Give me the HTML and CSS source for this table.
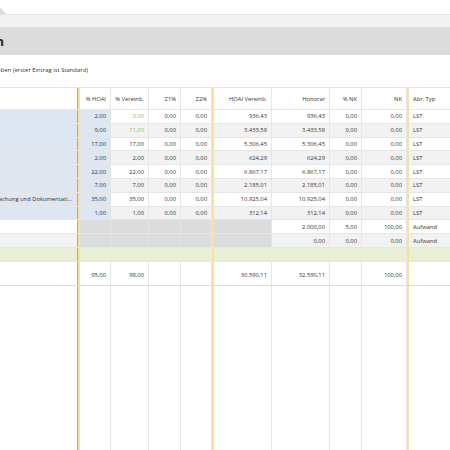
FILE: index.html
```html
<!DOCTYPE html>
<html lang="de">
<head>
<meta charset="utf-8">
<title>Honorarermittlung</title>
<link rel="stylesheet" href="styles.css">
</head>
<body>
<div class="app">
  <div class="tabbar"><div class="tab"></div></div>
  <div class="toolbar"></div>
  <div class="titlebar"><div class="title">Honorar Leistungsphasen</div></div>
  <div class="content">
    <div class="hint"><span>Bitte Abrechnungstypen angeben (erster Eintrag ist Standard)</span></div>
    <div class="grid">
      <div class="row head">
        <div class="c desc"></div><div class="sep1"></div>
        <div class="c">% HOAI</div><div class="c">% Vereinb.</div><div class="c">Z1%</div><div class="c">Z2%</div><div class="sep2"></div>
        <div class="c">HOAI Vereinb.</div><div class="c">Honorar</div><div class="c">% NK</div><div class="c">NK</div><div class="sep3"></div>
        <div class="c left">Abr. Typ</div>
      </div>
      <div class="row">
        <div class="c desc blue"></div><div class="sep1"></div>
        <div class="c blue">2,00</div><div class="c green">3,00</div><div class="c">0,00</div><div class="c">0,00</div><div class="sep2"></div>
        <div class="c">936,43</div><div class="c">936,43</div><div class="c">0,00</div><div class="c">0,00</div><div class="sep3"></div>
        <div class="c left">LST</div>
      </div>
      <div class="row alt">
        <div class="c desc blue"></div><div class="sep1"></div>
        <div class="c blue">9,00</div><div class="c green">11,00</div><div class="c">0,00</div><div class="c">0,00</div><div class="sep2"></div>
        <div class="c">3.433,58</div><div class="c">3.433,58</div><div class="c">0,00</div><div class="c">0,00</div><div class="sep3"></div>
        <div class="c left">LST</div>
      </div>
      <div class="row">
        <div class="c desc blue"></div><div class="sep1"></div>
        <div class="c blue">17,00</div><div class="c">17,00</div><div class="c">0,00</div><div class="c">0,00</div><div class="sep2"></div>
        <div class="c">5.306,45</div><div class="c">5.306,45</div><div class="c">0,00</div><div class="c">0,00</div><div class="sep3"></div>
        <div class="c left">LST</div>
      </div>
      <div class="row alt">
        <div class="c desc blue"></div><div class="sep1"></div>
        <div class="c blue">2,00</div><div class="c">2,00</div><div class="c">0,00</div><div class="c">0,00</div><div class="sep2"></div>
        <div class="c">624,29</div><div class="c">624,29</div><div class="c">0,00</div><div class="c">0,00</div><div class="sep3"></div>
        <div class="c left">LST</div>
      </div>
      <div class="row">
        <div class="c desc blue"></div><div class="sep1"></div>
        <div class="c blue">22,00</div><div class="c">22,00</div><div class="c">0,00</div><div class="c">0,00</div><div class="sep2"></div>
        <div class="c">6.867,17</div><div class="c">6.867,17</div><div class="c">0,00</div><div class="c">0,00</div><div class="sep3"></div>
        <div class="c left">LST</div>
      </div>
      <div class="row alt">
        <div class="c desc blue"></div><div class="sep1"></div>
        <div class="c blue">7,00</div><div class="c">7,00</div><div class="c">0,00</div><div class="c">0,00</div><div class="sep2"></div>
        <div class="c">2.185,01</div><div class="c">2.185,01</div><div class="c">0,00</div><div class="c">0,00</div><div class="sep3"></div>
        <div class="c left">LST</div>
      </div>
      <div class="row">
        <div class="c desc blue"><span class="clip">8 Objektüberwachung – Bauüberwachung und Dokumentati…</span></div><div class="sep1"></div>
        <div class="c blue">35,00</div><div class="c">35,00</div><div class="c">0,00</div><div class="c">0,00</div><div class="sep2"></div>
        <div class="c">10.925,04</div><div class="c">10.925,04</div><div class="c">0,00</div><div class="c">0,00</div><div class="sep3"></div>
        <div class="c left">LST</div>
      </div>
      <div class="row alt">
        <div class="c desc blue"></div><div class="sep1"></div>
        <div class="c blue">1,00</div><div class="c">1,00</div><div class="c">0,00</div><div class="c">0,00</div><div class="sep2"></div>
        <div class="c">312,14</div><div class="c">312,14</div><div class="c">0,00</div><div class="c">0,00</div><div class="sep3"></div>
        <div class="c left">LST</div>
      </div>
      <div class="row">
        <div class="c desc"></div><div class="sep1"></div>
        <div class="c dark"></div><div class="c dark"></div><div class="c dark"></div><div class="c dark"></div><div class="sep2"></div>
        <div class="c dark"></div><div class="c">2.000,00</div><div class="c">5,00</div><div class="c">100,00</div><div class="sep3"></div>
        <div class="c left">Aufwand</div>
      </div>
      <div class="row alt">
        <div class="c desc"></div><div class="sep1"></div>
        <div class="c dark"></div><div class="c dark"></div><div class="c dark"></div><div class="c dark"></div><div class="sep2"></div>
        <div class="c dark"></div><div class="c">0,00</div><div class="c">0,00</div><div class="c">0,00</div><div class="sep3"></div>
        <div class="c left">Aufwand</div>
      </div>
      <div class="row new">
        <div class="c desc"></div><div class="sep1"></div>
        <div class="c"></div><div class="c"></div><div class="c"></div><div class="c"></div><div class="sep2"></div>
        <div class="c"></div><div class="c"></div><div class="c"></div><div class="c"></div><div class="sep3"></div>
        <div class="c left"></div>
      </div>
      <div class="row total">
        <div class="c desc"></div><div class="sep1"></div>
        <div class="c">95,00</div><div class="c">98,00</div><div class="c"></div><div class="c"></div><div class="sep2"></div>
        <div class="c">30.590,11</div><div class="c">32.590,11</div><div class="c"></div><div class="c">100,00</div><div class="sep3"></div>
        <div class="c left"></div>
      </div>
      <div class="row filler">
        <div class="c desc"></div><div class="sep1"></div>
        <div class="c"></div><div class="c"></div><div class="c"></div><div class="c"></div><div class="sep2"></div>
        <div class="c"></div><div class="c"></div><div class="c"></div><div class="c"></div><div class="sep3"></div>
        <div class="c left"></div>
      </div>
    </div>
  </div>
</div>
</body>
</html>
```

FILE: styles.css
```css
* { box-sizing: border-box; }
html, body { margin: 0; padding: 0; }
body {
  width: 450px;
  height: 450px;
  overflow: hidden;
  background: #fff;
  font-family: "Open Sans", "Noto Sans", sans-serif;
  color: #333;
}
.app { display: flex; flex-direction: column; height: 450px; }

.tabbar {
  height: 15px;
  border-bottom: 1px solid #e4e4e4;
  display: flex;
  align-items: flex-end;
}
.tab {
  width: 6px;
  height: 7px;
  background: #dadada;
  clip-path: polygon(0 0, 100% 100%, 0 100%);
}
.toolbar { height: 12px; background: #f3f3f3; }
.titlebar {
  height: 28px;
  background: #dcdcdc;
  display: flex;
  align-items: center;
}
.title {
  width: 4px;
  display: flex;
  justify-content: flex-end;
  white-space: nowrap;
  font-weight: 700;
  font-size: 13px;
  color: #2a2a2a;
}

.content { flex: 1; display: flex; flex-direction: column; padding-top: 10px; }
.hint {
  width: 88px;
  height: 10px;
  line-height: 10px;
  display: flex;
  justify-content: flex-end;
  white-space: nowrap;
  font-size: 5.9px;
  color: #333;
}
.grid {
  margin-top: 12px;
  flex: 1;
  display: flex;
  flex-direction: column;
  border-top: 1px solid #e4e4e4;
}
.row {
  display: grid;
  grid-template-columns: 77px 3px 31px 38px 32px 31px 2px 58px 58px 32px 45px 2px 1fr;
  height: 13.8px;
  border-bottom: 1px solid #e6e6e6;
  font-size: 5.8px;
  background: #fff;
}
.row.alt { background: #f2f2f2; }
.row.head { height: 22px; }
.row.new { background: #e8f0d6; }
.row.total { height: 24px; border-bottom-color: #dedede; }
.row.total .c { padding-top: 4px; }
.row.filler { flex: 1; border-bottom: none; }

.c {
  border-right: 1px solid #e6e6e6;
  padding: 0 4px;
  display: flex;
  align-items: center;
  justify-content: flex-end;
  white-space: nowrap;
  overflow: visible;
}
.c.left { justify-content: flex-start; border-right: none; }
.c.desc { border-right: none; padding-right: 5px; }
.new .c { border-right-color: transparent; }
.blue { background: #dde6f1; }
.dark { background: #dcdcdc; }
.green { color: #8cc43c; }
.clip { display: block; }

.sep1 { background: linear-gradient(to right, #a9a9a9 0 1px, #f6e29a 1px); }
.sep2, .sep3 { background: #f6e29a; }
```
